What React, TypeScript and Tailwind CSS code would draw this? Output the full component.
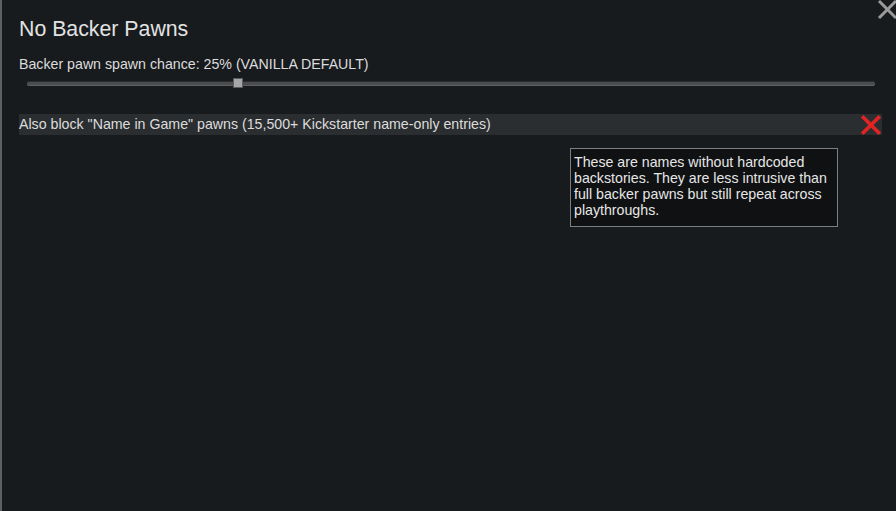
export default function App() {
  return (
    <div
      className="relative w-[896px] h-[511px] overflow-hidden bg-[#181b1e] text-[#dcdcdc] border-l-2 border-[#5e6062]"
      style={{ fontFamily: '"Liberation Sans", Arial, sans-serif' }}
    >
      {/* close button */}
      <div className="absolute right-0 top-0 w-[20px] h-[20px]">
        <svg viewBox="0 0 20 20" className="w-[20px] h-[20px]">
          <path d="M3 1 L20 18 M20 1 L3 18" stroke="#9a9a9a" strokeWidth="3" />
        </svg>
      </div>

      <div className="flex flex-col pl-[17px] pr-[14px] pt-[17px]">
        <h1 className="text-[21.3px] leading-[24px] text-[#e2e2e2]">No Backer Pawns</h1>

        <div className="mt-[15px] text-[14.2px] leading-[16px]">
          Backer pawn spawn chance: 25% (VANILLA DEFAULT)
        </div>

        <div className="relative mt-[5px] ml-[8px] mr-[7px] h-[12px] flex items-center">
          <div className="w-full h-[5px] rounded-[2px] bg-[#4a4c4e] border-t border-[#2a2c2e] border-b border-b-[#5e6062]" />
          <div className="absolute left-[206px] top-[1px] w-[10px] h-[10px] bg-[#a4a6a8] border border-[#5a5c5e]" />
        </div>

        <div className="mt-[25px] h-[21px] flex items-center justify-between bg-[#2b2e31] text-[14.2px]">
          <span>Also block "Name in Game" pawns (15,500+ Kickstarter name-only entries)</span>
          <svg viewBox="0 0 20 20" className="w-[22px] h-[22px]">
            <path d="M2 2 L18 18 M18 2 L2 18" stroke="#e02424" strokeWidth="3.4" />
          </svg>
        </div>

        <div className="flex">
          <div className="ml-[551px] mt-[13px] w-[268px] border border-[#7c7e80] bg-[#0f1113] px-[3px] pt-[5px] pb-[8px] text-[14.2px] leading-[16px] text-[#e6e6e6]">
            These are names without hardcoded backstories. They are less intrusive than full backer pawns but still repeat across playthroughs.
          </div>
        </div>
      </div>
    </div>
  );
}
